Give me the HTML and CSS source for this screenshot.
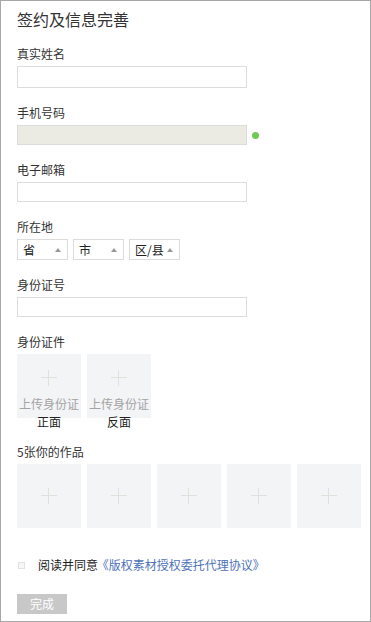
FILE: index.html
```html
<!DOCTYPE html>
<html lang="zh-CN">
<head>
<meta charset="utf-8">
<title>签约及信息完善</title>
<link rel="stylesheet" href="styles.css">
</head>
<body>
<div class="page">
  <h1 class="title">签约及信息完善</h1>

  <div class="field field-first">
    <div class="label">真实姓名</div>
    <div class="input input-tall"></div>
  </div>

  <div class="field">
    <div class="label">手机号码</div>
    <div class="row">
      <div class="input input-disabled"></div>
      <span class="dot"></span>
    </div>
  </div>

  <div class="field">
    <div class="label">电子邮箱</div>
    <div class="input"></div>
  </div>

  <div class="field">
    <div class="label">所在地</div>
    <div class="selects">
      <div class="select"><span>省</span><span class="arrow"></span></div>
      <div class="select"><span>市</span><span class="arrow"></span></div>
      <div class="select"><span>区/县</span><span class="arrow"></span></div>
    </div>
  </div>

  <div class="field">
    <div class="label">身份证号</div>
    <div class="input"></div>
  </div>

  <div class="field field-id">
    <div class="label">身份证件</div>
    <div class="uploads">
      <div class="upload-item">
        <div class="box box-text">
          <span class="plus"></span>
          <span class="hint">上传身份证</span>
        </div>
        <div class="sub">正面</div>
      </div>
      <div class="upload-item">
        <div class="box box-text">
          <span class="plus"></span>
          <span class="hint">上传身份证</span>
        </div>
        <div class="sub">反面</div>
      </div>
    </div>
  </div>

  <div class="field">
    <div class="label">5张你的作品</div>
    <div class="uploads">
      <div class="box"><span class="plus"></span></div>
      <div class="box"><span class="plus"></span></div>
      <div class="box"><span class="plus"></span></div>
      <div class="box"><span class="plus"></span></div>
      <div class="box"><span class="plus"></span></div>
    </div>
  </div>

  <div class="agree">
    <span class="check"></span>
    <span class="agree-text">阅读并同意 <span class="link">《版权素材授权委托代理协议》</span></span>
  </div>

  <div class="btn">完成</div>
</div>
</body>
</html>
```

FILE: styles.css
```css
* { box-sizing: border-box; }
html, body { margin: 0; padding: 0; background: #fff; }
body {
  font-family: "Noto Sans CJK SC", "Microsoft YaHei", sans-serif;
  font-size: 12px;
  color: #333;
}
.page {
  width: 371px;
  height: 622px;
  border: 1px solid #a7a7a7;
  padding: 0 16px;
  overflow: hidden;
}
.title {
  margin: 7px 0 0;
  font-size: 16px;
  line-height: 22px;
  font-weight: normal;
  color: #333;
}
.field { margin-top: 16px; }
.field-first { margin-top: 15px; }
.label {
  line-height: 18px;
  margin-bottom: 3px;
  color: #333;
}
.input {
  width: 230px;
  height: 20px;
  border: 1px solid #dcdcdc;
  background: #fff;
}
.input-tall { height: 22px; }
.row { display: flex; align-items: center; }
.input-disabled {
  background: #ebebe4;
  border-color: #dcdcdc;
}
.dot {
  width: 7px;
  height: 7px;
  border-radius: 50%;
  background: #72c957;
  margin-left: 5px;
}
.selects { display: flex; gap: 5px; }
.select {
  width: 51px;
  height: 21px;
  border: 1px solid #dcdcdc;
  display: flex;
  align-items: center;
  justify-content: space-between;
  padding: 0 6px 0 5px;
  line-height: 19px;
  color: #222;
}
.arrow {
  width: 0;
  height: 0;
  border-left: 3px solid transparent;
  border-right: 3px solid transparent;
  border-bottom: 4px solid #999;
  margin-top: 1px;
  flex-shrink: 0;
}
.uploads { display: flex; gap: 6px; }
.upload-item { width: 64px; flex-shrink: 0; }
.box {
  width: 64px;
  height: 64px;
  flex-shrink: 0;
  background: #f3f4f6;
  display: flex;
  flex-direction: column;
  align-items: center;
  justify-content: center;
}
.box-text { justify-content: flex-start; padding-top: 16px; }
.plus {
  position: relative;
  width: 16px;
  height: 16px;
  display: block;
}
.plus::before, .plus::after {
  content: "";
  position: absolute;
  background: #e0e0dc;
}
.plus::before { left: 0; right: 0; top: 7px; height: 1px; }
.plus::after { top: 0; bottom: 0; left: 7px; width: 1px; }
.hint {
  margin-top: 9px;
  line-height: 18px;
  color: #a3a3a3;
  white-space: nowrap;
}
.sub {
  text-align: center;
  line-height: 18px;
  margin-top: -5px;
  color: #222;
}
.field-id + .field { margin-top: 12px; }
.agree {
  margin-top: 28px;
  display: flex;
  align-items: center;
  line-height: 18px;
}
.check {
  width: 7px;
  height: 7px;
  border: 1px solid #e2e2e2;
  background: #f6f6f6;
  margin-left: 1px;
  margin-right: 13px;
}
.agree-text { color: #222; }
.link { color: #4d72b9; margin-left: -4px; }
.btn {
  margin-top: 20px;
  width: 50px;
  height: 20px;
  background: #c8c8c8;
  color: #fff;
  line-height: 20px;
  text-align: center;
}
```
